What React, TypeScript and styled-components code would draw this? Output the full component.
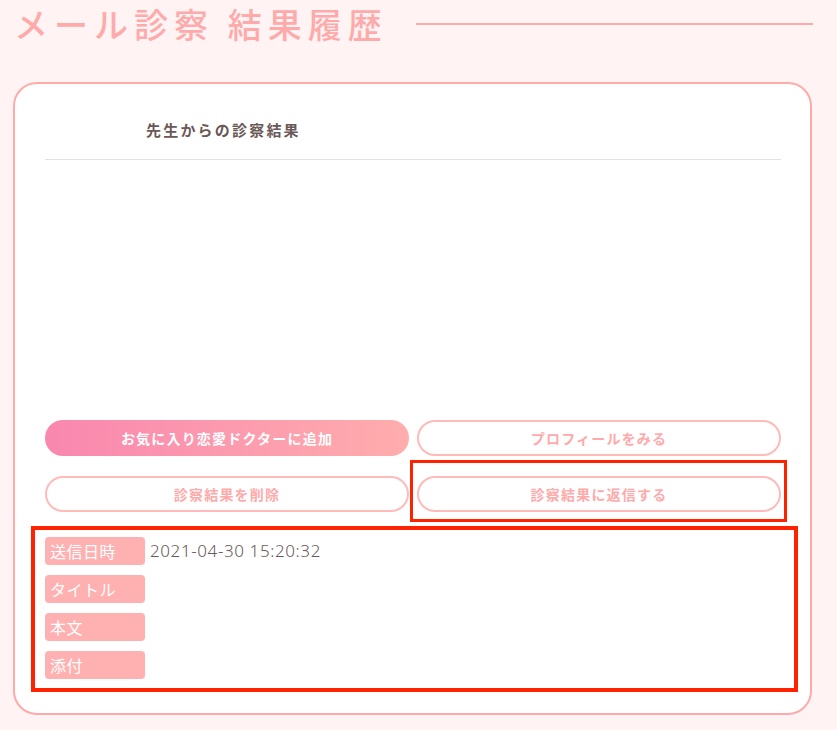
import React from 'react'
import styled, { createGlobalStyle } from 'styled-components'

const jp = '"Noto Sans CJK JP", "Noto Sans", sans-serif'
const pink = '#ffaaaa'
const ink = '#6b5858'

const GlobalStyle = createGlobalStyle`
  html, body {
    margin: 0;
    padding: 0;
    background: #fff3f3;
    font-family: ${jp};
  }
`

const Page = styled.div`
  padding: 0 25px 14px 13px;
  width: 837px;
  min-height: 730px;
  box-sizing: border-box;
`

const TitleBar = styled.div`
  display: flex;
  align-items: center;
  height: 48px;
  padding-left: 1px;
`

const Title = styled.h1`
  margin: 0;
  font-size: 34px;
  font-weight: 500;
  letter-spacing: 6px;
  color: ${pink};
  line-height: 48px;
  white-space: nowrap;
`

const TitleRule = styled.div`
  flex: 1;
  height: 2px;
  margin-left: 28px;
  margin-right: -1px;
  background: ${pink};
`

const Card = styled.section`
  margin-top: 34px;
  background: #fff;
  border: 2px solid ${pink};
  border-radius: 24px;
  padding: 30px 29px 34px 30px;
`

const CardHead = styled.div`
  height: 46px;
  border-bottom: 1px solid #e2e2e2;
  padding-left: 101px;
  box-sizing: border-box;
`

const CardTitle = styled.h2`
  margin: 0;
  font-size: 15px;
  font-weight: 700;
  letter-spacing: 2.2px;
  line-height: 32px;
  color: ${ink};
`

const Blank = styled.div`
  height: 260px;
`

const Buttons = styled.div`
  display: grid;
  grid-template-columns: 1fr 1fr;
  column-gap: 8px;
  row-gap: 20px;
`

const Slot = styled.div`
  position: relative;
`

const Button = styled.button<{ $filled?: boolean }>`
  display: block;
  width: 100%;
  height: 36px;
  border-radius: 18px;
  font-family: ${jp};
  font-size: 14px;
  font-weight: 700;
  letter-spacing: 1.2px;
  box-sizing: border-box;
  border: ${p => (p.$filled ? 'none' : `2px solid #ffbaba`)};
  background: ${p => (p.$filled ? 'linear-gradient(90deg, #f987af 0%, #ffadad 100%)' : '#fff')};
  color: ${p => (p.$filled ? '#fff' : pink)};
  cursor: pointer;
`

const Mark = styled.div<{ $w: number }>`
  position: absolute;
  border: ${p => p.$w}px solid #ff2200;
  pointer-events: none;
`

const ReplyMark = styled(Mark)`
  top: -16px;
  bottom: -10px;
  left: -7px;
  right: -6px;
`

const InfoMark = styled(Mark)`
  top: -11px;
  bottom: -13px;
  left: -14px;
  right: -17px;
`

const Info = styled.dl`
  position: relative;
  margin: 25px 0 0;
  display: grid;
  grid-template-columns: 100px 1fr;
  column-gap: 5px;
  row-gap: 10px;
`

const Label = styled.dt`
  height: 28px;
  background: #ffb0b0;
  border-radius: 4px;
  color: #fff;
  font-size: 16px;
  line-height: 28px;
  padding-left: 5px;
  letter-spacing: 0.5px;
`

const Value = styled.dd`
  margin: 0;
  font-family: "Noto Sans", ${jp};
  font-size: 17px;
  line-height: 28px;
  font-weight: 300;
  letter-spacing: 0.6px;
  color: ${ink};
`

const rows: [string, string][] = [
  ['送信日時', '2021-04-30 15:20:32'],
  ['タイトル', ''],
  ['本文', ''],
  ['添付', ''],
]

export default function App() {
  return (
    <Page>
      <GlobalStyle />
      <TitleBar>
        <Title>メール診察 結果履歴</Title>
        <TitleRule />
      </TitleBar>
      <Card>
        <CardHead>
          <CardTitle>先生からの診察結果</CardTitle>
        </CardHead>
        <Blank />
        <Buttons>
          <Slot>
            <Button $filled>お気に入り恋愛ドクターに追加</Button>
          </Slot>
          <Slot>
            <Button>プロフィールをみる</Button>
          </Slot>
          <Slot>
            <Button>診察結果を削除</Button>
          </Slot>
          <Slot>
            <Button>診察結果に返信する</Button>
            <ReplyMark $w={3} />
          </Slot>
        </Buttons>
        <Info>
          {rows.map(([k, v]) => (
            <React.Fragment key={k}>
              <Label>{k}</Label>
              <Value>{v}</Value>
            </React.Fragment>
          ))}
          <InfoMark $w={4} />
        </Info>
      </Card>
    </Page>
  )
}
